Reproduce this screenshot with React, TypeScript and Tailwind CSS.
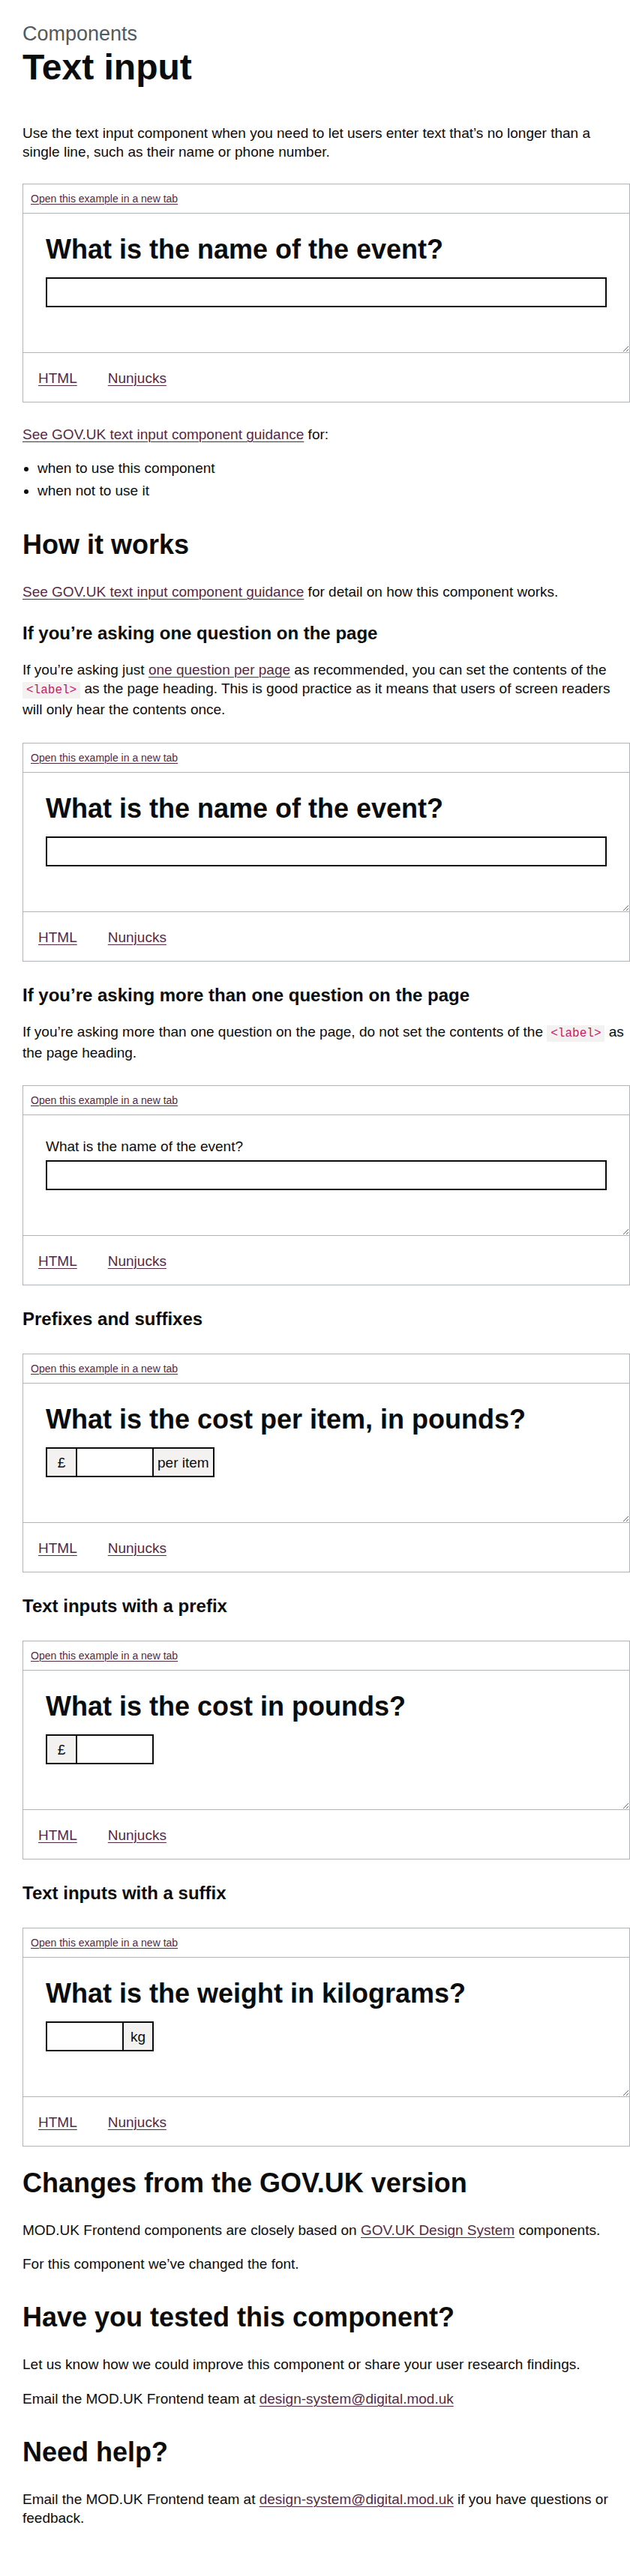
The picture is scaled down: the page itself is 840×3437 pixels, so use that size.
import React from "react";

const LINK = "text-[#532a45] underline decoration-1 underline-offset-[0.1578em]";

function A({ children }: { children: React.ReactNode }) {
  return (
    <a href="#" className={LINK}>
      {children}
    </a>
  );
}

function Code({ children }: { children: React.ReactNode }) {
  return (
    <code className="bg-[#f3f2f1] px-[5px] py-[2px] text-[16px] text-[#c21a63] [font-family:'Liberation_Mono',monospace]">
      {children}
    </code>
  );
}

function P({ className = "", children }: { className?: string; children: React.ReactNode }) {
  return <p className={`text-[19px] leading-[25px] ${className}`}>{children}</p>;
}

function H2({ className = "", children }: { className?: string; children: React.ReactNode }) {
  return <h2 className={`text-[36px] font-bold leading-[40px] ${className}`}>{children}</h2>;
}

function H3({ className = "", children }: { className?: string; children: React.ReactNode }) {
  return <h3 className={`text-[24px] font-bold leading-[30px] ${className}`}>{children}</h3>;
}

const INPUT = "block h-[40px] border-2 border-[#0b0c0c] bg-white";
const AFFIX =
  "flex h-[40px] min-w-[40px] items-center justify-center border-2 border-[#0b0c0c] bg-[#f3f2f1] px-[5px] text-[19px] leading-[25px]";

function Example({
  className = "",
  label,
  variant = "heading",
  control = "full",
}: {
  className?: string;
  label: string;
  variant?: "heading" | "label";
  control?: "full" | "both" | "prefix" | "suffix";
}) {
  let ctrl: React.ReactNode;
  if (control === "full") {
    ctrl = <div className={`${INPUT} w-full`} />;
  } else {
    ctrl = (
      <div className="flex">
        {(control === "both" || control === "prefix") && <div className={`${AFFIX} border-r-0`}>£</div>}
        <div className={`${INPUT} w-[104px]`} />
        {(control === "both" || control === "suffix") && (
          <div className={`${AFFIX} border-l-0`}>{control === "both" ? "per item" : "kg"}</div>
        )}
      </div>
    );
  }
  return (
    <div className={`w-[810px] border border-[#b1b4b6] ${className}`}>
      <div className="border-b border-[#b1b4b6] px-[10px] py-[9px] text-[14px] leading-[20px]">
        <a href="#" className={LINK}>
          Open this example in a new tab
        </a>
      </div>
      {variant === "heading" ? (
        <div className="h-[186px] resize-y overflow-auto border-b border-[#b1b4b6] px-[30px] pt-[28px]">
          <div className="mb-[17px] text-[36px] font-bold leading-[40px]">{label}</div>
          {ctrl}
        </div>
      ) : (
        <div className="h-[161px] resize-y overflow-auto border-b border-[#b1b4b6] px-[30px] pt-[29px]">
          <div className="mb-[6px] text-[19px] leading-[25px]">{label}</div>
          {ctrl}
        </div>
      )}
      <div className="flex h-[65px] pl-[20px] pt-[21px] text-[19px] leading-[25px]">
        <a href="#" className={LINK}>
          HTML
        </a>
        <a href="#" className={`${LINK} ml-[41px]`}>
          Nunjucks
        </a>
      </div>
    </div>
  );
}

export default function App() {
  return (
    <div className="min-h-[3437px] bg-white pb-[72px] pl-[30px] pt-[30px] text-[#0b0c0c] [font-family:'Liberation_Sans',Arial,sans-serif]">
      <div className="w-[810px]">
        <span className="block text-[27px] leading-[30px] text-[#505a5f]">Components</span>
        <h1 className="mt-[5px] text-[48px] font-bold leading-[50px]">Text input</h1>

        <P className="mt-[50px]">
          Use the text input component when you need to let users enter text that’s no longer than a single line,
          such as their name or phone number.
        </P>

        <Example className="mt-[30px]" label="What is the name of the event?" />

        <P className="mt-[30px]">
          <A>See GOV.UK text input component guidance</A> for:
        </P>
        <ul className="mt-[20px] list-disc pl-[20px] text-[19px] leading-[25px]">
          <li>when to use this component</li>
          <li className="mt-[5px]">when not to use it</li>
        </ul>

        <H2 className="mt-[40px]">How it works</H2>
        <P className="mt-[30px]">
          <A>See GOV.UK text input component guidance</A> for detail on how this component works.
        </P>

        <H3 className="mt-[28px]">If you’re asking one question on the page</H3>
        <P className="mt-[21px]">
          If you’re asking just <A>one question per page</A> as recommended, you can set the contents of the{" "}
          <Code>&lt;label&gt;</Code> as the page heading. This is good practice as it means that users of screen
          readers will only hear the contents once.
        </P>

        <Example className="mt-[32px]" label="What is the name of the event?" />

        <H3 className="mt-[30px]">If you’re asking more than one question on the page</H3>
        <P className="mt-[21px]">
          If you’re asking more than one question on the page, do not set the contents of the{" "}
          <Code>&lt;label&gt;</Code> as the page heading.
        </P>

        <Example className="mt-[31px]" label="What is the name of the event?" variant="label" />

        <H3 className="mt-[30px]">Prefixes and suffixes</H3>
        <Example className="mt-[31px]" label="What is the cost per item, in pounds?" control="both" />

        <H3 className="mt-[30px]">Text inputs with a prefix</H3>
        <Example className="mt-[31px]" label="What is the cost in pounds?" control="prefix" />

        <H3 className="mt-[30px]">Text inputs with a suffix</H3>
        <Example className="mt-[31px]" label="What is the weight in kilograms?" control="suffix" />

        <H2 className="mt-[29px]">Changes from the GOV.UK version</H2>
        <P className="mt-[30px]">
          MOD.UK Frontend components are closely based on <A>GOV.UK Design System</A> components.
        </P>
        <P className="mt-[20px]">For this component we’ve changed the font.</P>

        <H2 className="mt-[39px]">Have you tested this component?</H2>
        <P className="mt-[30px]">
          Let us know how we could improve this component or share your user research findings.
        </P>
        <P className="mt-[21px]">
          Email the MOD.UK Frontend team at <A>design-system@digital.mod.uk</A>
        </P>

        <H2 className="mt-[39px]">Need help?</H2>
        <P className="mt-[30px]">
          Email the MOD.UK Frontend team at <A>design-system@digital.mod.uk</A> if you have questions or feedback.
        </P>
      </div>
    </div>
  );
}
